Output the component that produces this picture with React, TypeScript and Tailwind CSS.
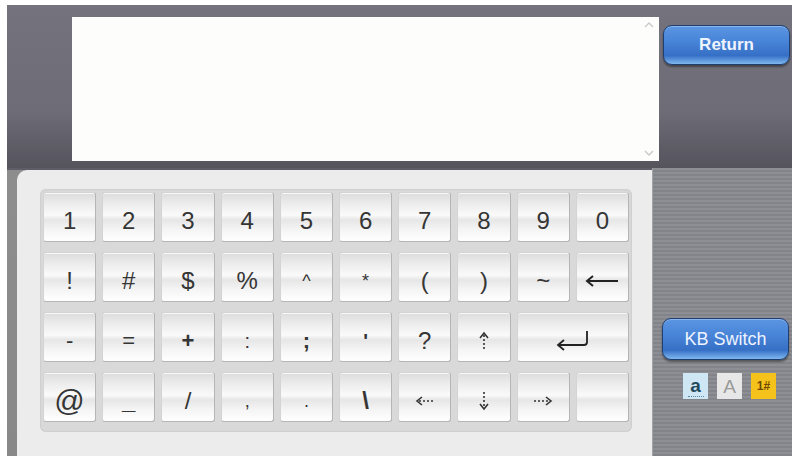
import type { ReactNode } from "react";

type KeyProps = {
  children?: ReactNode;
  wide?: boolean;
  size?: string;
};

const Key = ({ children, wide, size = "text-[24px]" }: KeyProps) => (
  <div
    className={`${wide ? "col-span-2" : ""} flex items-center justify-center rounded-[3px] border border-t-[#d4d4d4] border-l-[#d4d4d4] border-r-[#b5b5b5] border-b-[#b5b5b5] bg-[linear-gradient(to_bottom,#dcdcdc_0%,#ececec_22%,#fafafa_46%,#e6e6e6_56%,#f4f4f4_75%,#ffffff_100%)] pt-[7px] ${size} leading-none text-[#353535] shadow-[inset_0_1px_0_rgba(255,255,255,0.8)]`}
  >
    {children}
  </div>
);

const LongLeft = () => (
  <svg width="36" height="14" viewBox="0 0 36 14" fill="none" stroke="#222" strokeWidth="2">
    <path d="M3 7 H34" />
    <path d="M9 2 L3 7 L9 12" />
  </svg>
);

const Enter = () => (
  <svg width="38" height="24" viewBox="0 0 38 24" fill="none" stroke="#222" strokeWidth="1.8">
    <path d="M33 2 V13 Q33 16 30 16 H4" />
    <path d="M10 11 L4 16 L10 21" />
  </svg>
);

const DotUp = () => (
  <svg width="12" height="20" viewBox="0 0 12 20" fill="none" stroke="#333" strokeWidth="1.6">
    <path d="M2 7 L6 2 L10 7" />
    <path d="M6 4 V19" strokeDasharray="2 2" />
  </svg>
);

const DotDown = () => (
  <svg width="12" height="20" viewBox="0 0 12 20" fill="none" stroke="#333" strokeWidth="1.6">
    <path d="M2 13 L6 18 L10 13" />
    <path d="M6 1 V16" strokeDasharray="2 2" />
  </svg>
);

const DotLeft = () => (
  <svg width="20" height="12" viewBox="0 0 20 12" fill="none" stroke="#333" strokeWidth="1.6">
    <path d="M7 2 L2 6 L7 10" />
    <path d="M4 6 H19" strokeDasharray="2 2" />
  </svg>
);

const DotRight = () => (
  <svg width="20" height="12" viewBox="0 0 20 12" fill="none" stroke="#333" strokeWidth="1.6">
    <path d="M13 2 L18 6 L13 10" />
    <path d="M1 6 H16" strokeDasharray="2 2" />
  </svg>
);

const BlueButton = ({ label, cls }: { label: string; cls: string }) => (
  <button
    className={`w-[127px] rounded-[9px] border border-[#1f3f73] bg-[linear-gradient(to_bottom,#5b96e2_0%,#4884d8_40%,#3670c6_78%,#7fb8ee_100%)] text-[#eef4ff] shadow-[0_2px_2px_rgba(0,0,0,0.4),inset_0_1px_0_rgba(255,255,255,0.3)] ${cls}`}
  >
    {label}
  </button>
);

export default function App() {
  const row1 = ["1", "2", "3", "4", "5", "6", "7", "8", "9", "0"];
  const row2 = ["!", "#", "$", "%", "^", "*", "(", ")", "~"];

  return (
    <div className="h-[459px] w-[795px] bg-white pl-[7px] pt-[5px] font-['Liberation_Sans',Arial,sans-serif]">
      <div className="flex h-[451px] w-[785px] flex-col">
        {/* top: text field */}
        <div className="flex h-[163px] bg-[linear-gradient(to_bottom,#74737d_0%,#6d6c77_65%,#55545d_100%)]">
          <div className="w-[65px]" />
          <div className="pt-[12px]">
            <div className="relative h-[144px] w-[587px] bg-[#fdfdfc]">
              <svg className="absolute right-[5px] top-[4px]" width="10" height="8" viewBox="0 0 10 8" fill="none" stroke="#c9c9c9" strokeWidth="1.4">
                <path d="M1 6 L5 2 L9 6" />
              </svg>
              <svg className="absolute bottom-[4px] right-[5px]" width="10" height="8" viewBox="0 0 10 8" fill="none" stroke="#c9c9c9" strokeWidth="1.4">
                <path d="M1 2 L5 6 L9 2" />
              </svg>
            </div>
          </div>
          <div className="pl-[4px] pt-[20px]">
            <BlueButton label="Return" cls="h-[40px] text-[17px] font-bold" />
          </div>
        </div>

        {/* bottom: keyboard */}
        <div className="flex h-[288px] bg-[linear-gradient(to_bottom,#5f5e68_0px,#5f5e68_2px,#8d8d8d_2px,#888888_100%)]">
          <div className="w-[10px]" />
          <div className="mt-[2px] w-[635px] rounded-tl-[10px] bg-[#ececec] pl-[23px] pt-[19px]">
            <div className="h-[243px] w-[592px] rounded-[6px] bg-[#d9d9d9] p-[3px] shadow-[inset_0_0_2px_rgba(0,0,0,0.15)]">
              <div className="grid grid-cols-10 auto-rows-[50px] gap-x-[6px] gap-y-[10px]">
                {row1.map((k) => (
                  <Key key={k}>{k}</Key>
                ))}
                {row2.map((k) => (
                  <Key key={k} size={k === "^" || k === "*" ? "text-[18px]" : "text-[24px]"}>
                    {k}
                  </Key>
                ))}
                <Key>
                  <LongLeft />
                </Key>

                <Key size="text-[22px]">-</Key>
                <Key size="text-[22px]">=</Key>
                <Key size="text-[22px] font-bold">+</Key>
                <Key size="text-[20px]">:</Key>
                <Key size="text-[22px] font-bold">;</Key>
                <Key size="text-[20px] font-bold">'</Key>
                <Key>?</Key>
                <Key>
                  <DotUp />
                </Key>
                <Key wide>
                  <Enter />
                </Key>

                <Key size="text-[30px]">@</Key>
                <Key size="text-[24px] font-bold">_</Key>
                <Key size="text-[24px]">/</Key>
                <Key size="text-[18px]">,</Key>
                <Key size="text-[18px]">.</Key>
                <Key size="text-[24px] font-bold">\</Key>
                <Key>
                  <DotLeft />
                </Key>
                <Key>
                  <DotDown />
                </Key>
                <Key>
                  <DotRight />
                </Key>
                <Key />
              </div>
            </div>
          </div>

          {/* right side panel */}
          <div className="flex flex-1 flex-col border-l border-[#a3a3a6] bg-[repeating-linear-gradient(to_bottom,#8e8f94_0px,#8e8f94_2px,#838489_2px,#838489_4px)] pl-[9px] pt-[150px]">
            <BlueButton label="KB Switch" cls="h-[42px] text-[18px]" />
            <div className="flex gap-[9px] pl-[21px] pt-[13px]">
              <div className="flex h-[26px] w-[25px] flex-col items-center justify-center bg-[#cfe7f5] text-[19px] font-bold leading-none text-[#1f4a5c]">
                a
                <div className="mt-[1px] h-0 w-[16px] border-b border-dotted border-[#5a8aa0]" />
              </div>
              <div className="flex h-[26px] w-[25px] items-center justify-center bg-[#e7e7e7] text-[19px] leading-none text-[#9a9a9a]">
                A
              </div>
              <div className="flex h-[26px] w-[25px] items-center justify-center bg-[#f5c21b] text-[12px] font-bold leading-none text-[#6d4a00]">
                1#
              </div>
            </div>
          </div>
        </div>
      </div>
    </div>
  );
}
